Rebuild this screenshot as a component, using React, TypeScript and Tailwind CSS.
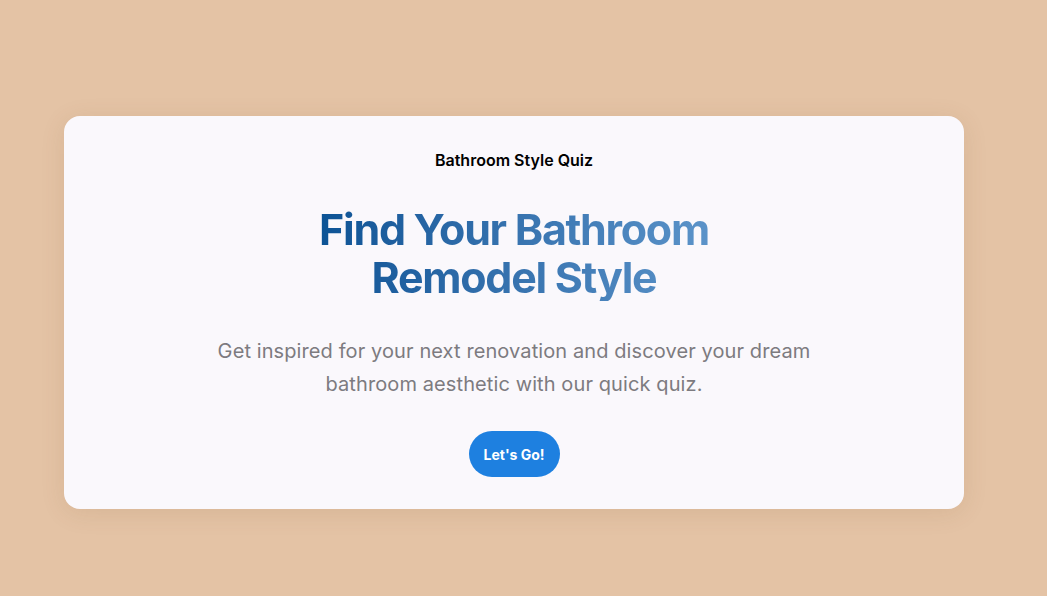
import React from 'react';

export default function App() {
  return (
    <div className="min-h-screen w-full bg-[#e4c3a5] pt-[116px] pl-16" style={{ fontFamily: 'Inter, "Noto Sans", sans-serif' }}>
      <div className="flex w-[900px] flex-col items-center rounded-2xl bg-[#faf8fc] px-10 pt-[34px] pb-[32px] text-center shadow-[0_4px_24px_rgba(120,80,40,0.12)]">
        <p className="text-[16px] font-semibold leading-5 text-black">Bathroom Style Quiz</p>
        <h1 className="mt-[35px] inline-block bg-gradient-to-r from-[#0b5395] to-[#5b93c9] bg-clip-text text-[43px] font-bold leading-[48px] tracking-[-0.03em] text-transparent">
          Find Your Bathroom
          <br />
          Remodel Style
        </h1>
        <p className="mt-[34px] max-w-[640px] text-[20px] leading-[33px] tracking-[0.005em] text-[#7d7b80]">
          Get inspired for your next renovation and discover your dream bathroom aesthetic with our quick quiz.
        </p>
        <button className="mt-[30px] h-[46px] rounded-full bg-[#1e80e0] px-[15px] text-[14px] font-bold text-white">
          Let&apos;s Go!
        </button>
      </div>
    </div>
  );
}
